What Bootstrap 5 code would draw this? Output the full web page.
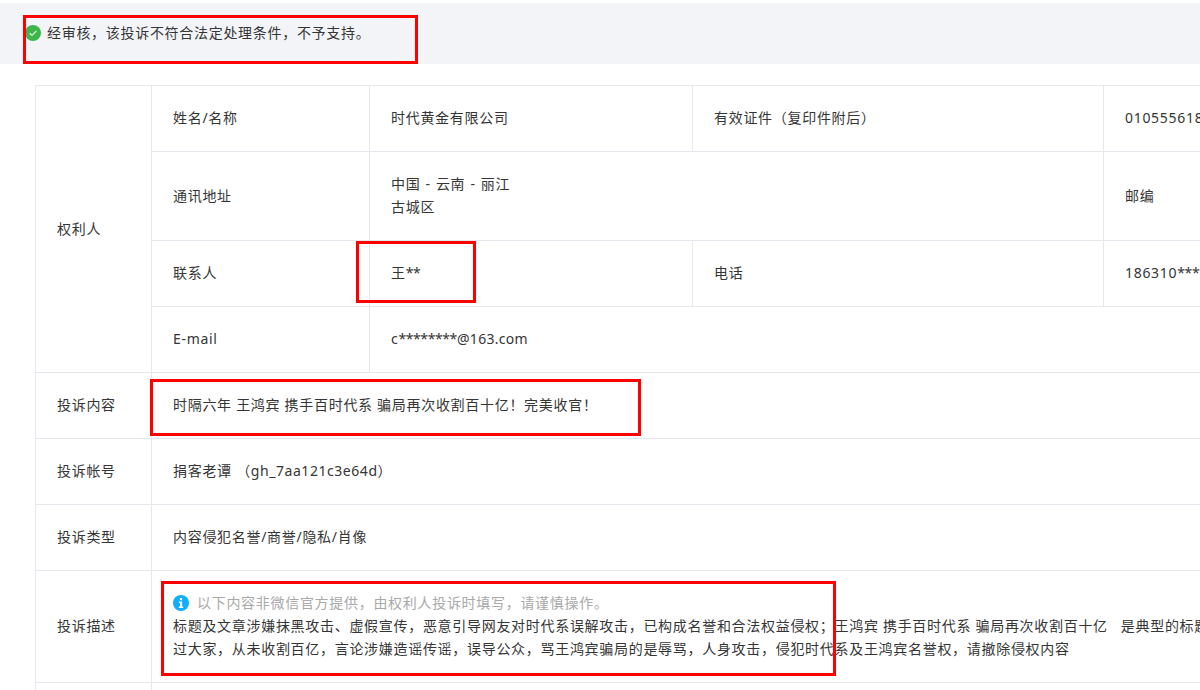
<!DOCTYPE html>
<html lang="zh-CN">
<head>
<meta charset="utf-8">
<title>投诉详情</title>
<link href="https://cdn.jsdelivr.net/npm/bootstrap@5.3.0/dist/css/bootstrap.min.css" rel="stylesheet">
<style>
html, body { height: 690px; overflow: hidden; background: #fff; }
body { font-family: "Noto Sans", "Noto Sans CJK SC", sans-serif; font-size: 14px; letter-spacing: .7px; line-height: 23px; color: #353535; position: relative; }
.verdict-bar { margin-top: 3px; height: 61px; background: #f3f4f8; padding: 0 25px 2px; }
.verdict-bar svg { flex: none; margin-right: 6px; }
.table-wrap { padding: 21px 0 0 35px; }
.detail-table { table-layout: fixed; width: 1330px; margin: 0; color: #353535; border-color: #e6e7ec; }
.detail-table > tbody > tr > td { padding: 20px 21px 22px; vertical-align: middle; line-height: 23px; border: 1px solid #e6e7ec; background: transparent; color: #353535; box-shadow: none; }
.detail-table p { margin: 0; white-space: nowrap; }
.notice-line { color: #a9a9a9; display: flex; align-items: center; }
.notice-line svg { margin-right: 8px; flex: none; }
.masked { letter-spacing: -.4px; }
.tight-latin { letter-spacing: .3px; }
.region-line { word-spacing: .8px; }
.account-id { letter-spacing: .55px; }
.redbox { position: absolute; border: 3px solid #f00; pointer-events: none; }
.rb-a { left: 23px; top: 15px; width: 395px; height: 49px; }
.rb-b { left: 356px; top: 241px; width: 120px; height: 62px; }
.rb-c { left: 150px; top: 379px; width: 491px; height: 57px; }
.rb-d { left: 161px; top: 581px; width: 675px; height: 95px; }
</style>
</head>
<body>
<div class="verdict-bar d-flex align-items-center">
  <svg width="16" height="16" viewBox="0 0 16 16" aria-hidden="true"><circle cx="8" cy="8" r="8" fill="#3cb54a"/><path d="M4.6 8.2 7 10.4 11.4 5.9" fill="none" stroke="#cfeed4" stroke-width="1.4"/></svg>
  <span>经审核，该投诉不符合法定处理条件，不予支持。</span>
</div>
<div class="table-wrap">
  <table class="table detail-table">
    <colgroup>
      <col style="width:116px"><col style="width:218px"><col style="width:323px"><col style="width:411px"><col style="width:262px">
    </colgroup>
    <tbody>
      <tr>
        <td rowspan="4">权利人</td>
        <td>姓名/名称</td>
        <td>时代黄金有限公司</td>
        <td>有效证件（复印件附后）</td>
        <td>010555618</td>
      </tr>
      <tr>
        <td>通讯地址</td>
        <td colspan="2"><span class="region-line">中国 - 云南 - 丽江</span><br>古城区</td>
        <td>邮编</td>
      </tr>
      <tr>
        <td>联系人</td>
        <td>王<span class="masked">**</span></td>
        <td>电话</td>
        <td>186310<span class="masked">****</span></td>
      </tr>
      <tr>
        <td>E-mail</td>
        <td colspan="3">c<span class="masked">********</span><span class="tight-latin">@163.com</span></td>
      </tr>
      <tr>
        <td>投诉内容</td>
        <td colspan="4">时隔六年 王鸿宾 携手百时代系 骗局再次收割百十亿！完美收官！</td>
      </tr>
      <tr>
        <td>投诉帐号</td>
        <td colspan="4">捐客老谭 （<span class="account-id">gh_7aa121c3e64d</span>）</td>
      </tr>
      <tr>
        <td>投诉类型</td>
        <td colspan="4">内容侵犯名誉/商誉/隐私/肖像</td>
      </tr>
      <tr>
        <td>投诉描述</td>
        <td colspan="4">
          <p class="notice-line"><svg width="16" height="16" viewBox="0 0 16 16" aria-hidden="true"><circle cx="8" cy="8" r="8" fill="#10aeff"/><rect x="6.9" y="3" width="2.2" height="2.2" fill="#fff"/><path d="M5.9 6.5H9.1V11.6H10.2V13H5.9V11.6H7V7.9H5.9Z" fill="#fff"/></svg>以下内容非微信官方提供，由权利人投诉时填写，请谨慎操作。</p>
          <p>标题及文章涉嫌抹黑攻击、虚假宣传，恶意引导网友对时代系误解攻击，已构成名誉和合法权益侵权；王鸿宾 携手百时代系 骗局再次收割百十亿 &nbsp;&nbsp;是典型的标题党，骗</p>
          <p>过大家，从未收割百亿，言论涉嫌造谣传谣，误导公众，骂王鸿宾骗局的是辱骂，人身攻击，侵犯时代系及王鸿宾名誉权，请撤除侵权内容</p>
        </td>
      </tr>
      <tr>
        <td>&nbsp;</td>
        <td colspan="4">&nbsp;</td>
      </tr>
    </tbody>
  </table>
</div>
<div class="redbox rb-a"></div>
<div class="redbox rb-b"></div>
<div class="redbox rb-c"></div>
<div class="redbox rb-d"></div>
<script src="https://cdn.jsdelivr.net/npm/bootstrap@5.3.0/dist/js/bootstrap.bundle.min.js"></script>
</body>
</html>
